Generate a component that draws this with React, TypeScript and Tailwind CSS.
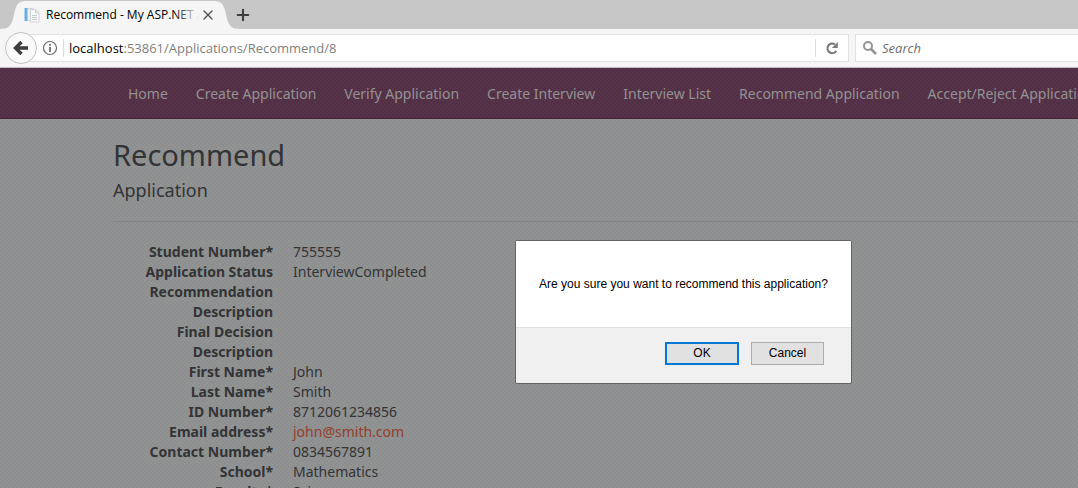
import { Plus, X } from 'lucide-react';

const navLinks = [
  'Home',
  'Create Application',
  'Verify Application',
  'Create Interview',
  'Interview List',
  'Recommend Application',
  'Accept/Reject Application',
];

const fields = [
  { label: 'Student Number*', value: '755555' },
  { label: 'Application Status', value: 'InterviewCompleted' },
  { label: 'Recommendation Description', value: '' },
  { label: 'Final Decision Description', value: '' },
  { label: 'First Name*', value: 'John' },
  { label: 'Last Name*', value: 'Smith' },
  { label: 'ID Number*', value: '8712061234856' },
  { label: 'Email address*', value: 'john@smith.com', mail: true },
  { label: 'Contact Number*', value: '0834567891' },
  { label: 'School*', value: 'Mathematics' },
  { label: 'Faculty*', value: 'Science' },
];

function PageIcon() {
  return (
    <svg width="16" height="16" viewBox="0 0 16 16" className="shrink-0">
      <path d="M1.500 1.500h8v12h-8z" fill="#eef1f4" stroke="#d6dade" />
      <path d="M0.500 1h3v13h-3z" fill="#69aede" />
      <path d="M6.500 2.500h5l3.500 3V15H6.500z" fill="#f7f8f9" stroke="#ced3d7" />
      <path d="M11.500 2.500V6H15" fill="#e4e7ea" stroke="#ced3d7" />
      <path d="M8 8.500h5M8 10.500h5M8 12.500h5" stroke="#c3c9cf" />
    </svg>
  );
}

function TabBar() {
  return (
    <div className="flex h-[29px] shrink-0 items-end bg-[#c7c7c7]">
      <div className="relative ml-[14px] flex h-7 w-[212px] items-center px-[10px]">
        <svg
          className="absolute -left-[14px] top-0"
          width="240"
          height="28"
          viewBox="0 0 240 28"
        >
          <path
            d="M0 28C8 28 11 25 13 18L15 9C17 3 19 0 26 0H214C221 0 223 3 225 9L227 18C229 25 232 28 240 28Z"
            fill="#f5f5f5"
          />
        </svg>
        <div className="relative flex w-full items-center">
          <PageIcon />
          <div className="relative ml-[6px] flex-1 overflow-hidden font-['Open_Sans',sans-serif] text-xs whitespace-nowrap text-black">
            Recommend - My ASP.NET Application
            <span className="absolute inset-y-0 right-0 w-6 bg-linear-to-r from-[#f5f5f5]/0 to-[#f5f5f5]" />
          </div>
          <button aria-label="Close tab" className="ml-px text-[#4d4d4d]">
            <X size={16} strokeWidth={1.8} />
          </button>
        </div>
      </div>
      <button aria-label="New tab" className="mb-[5px] ml-[8px] text-[#3f3f3f]">
        <Plus size={18} strokeWidth={2.8} />
      </button>
    </div>
  );
}

function Toolbar() {
  return (
    <div className="flex h-[39px] shrink-0 items-center overflow-hidden border-b border-[#bcbcbc] bg-[#f5f5f5] pl-[5px] font-['Open_Sans',sans-serif] text-[13px]">
      <button
        aria-label="Back"
        className="z-10 flex size-8 shrink-0 items-center justify-center rounded-full border border-[#c1c1c1] bg-[#fafafa]"
      >
        <svg width="16" height="16" viewBox="0 0 16 16">
          <path
            d="M8.500 2 2.500 8l6 6M3 8h12"
            fill="none"
            stroke="#3d3d3d"
            strokeWidth="3.400"
          />
        </svg>
      </button>
      <div className="-ml-3 flex h-7 flex-1 items-center border border-[#e1e1e1] bg-white pl-4">
        <svg width="16" height="16" viewBox="0 0 16 16" className="shrink-0">
          <circle cx="8" cy="8" r="6.500" fill="none" stroke="#6b6b6b" strokeWidth="1.200" />
          <path d="M7.100 7h1.800v5H7.100zM7.100 4h1.800v1.800H7.100z" fill="#6b6b6b" />
        </svg>
        <span className="ml-[5px] h-[18px] w-px bg-[#dcdcdc]" />
        <div className="ml-[5px] flex-1 pt-0.5 whitespace-nowrap text-[#808080]">
          <span className="text-black">localhost</span>:53861/Applications/Recommend/8
        </div>
        <span className="h-[18px] w-px bg-[#dcdcdc]" />
        <button aria-label="Reload" className="flex w-8 justify-center">
          <svg width="14" height="14" viewBox="0 0 14 14">
            <path
              d="M11.300 10A4.800 4.800 0 1 1 10 3.300"
              fill="none"
              stroke="#7b7b7b"
              strokeWidth="2.200"
            />
            <path d="M12.800 1v6h-6z" fill="#7b7b7b" />
          </svg>
        </button>
      </div>
      <label className="-mr-1 ml-[6px] flex h-7 w-[227px] items-center border border-[#e1e1e1] bg-white pl-[6px]">
        <svg width="16" height="16" viewBox="0 0 16 16" className="shrink-0">
          <circle cx="6" cy="6" r="4" fill="none" stroke="#949494" strokeWidth="2" />
          <path d="m9 9 5 5" stroke="#949494" strokeWidth="2.600" />
        </svg>
        <input
          aria-label="Search"
          placeholder="Search"
          className="ml-1 w-full min-w-0 pt-0.5 italic outline-none placeholder:text-[#6f6f6f]"
        />
      </label>
    </div>
  );
}

function ConfirmDialog() {
  return (
    <div
      role="dialog"
      aria-label="Confirm"
      className="absolute top-[172px] left-[515px] w-[337px] rounded-xs border border-[#626364] bg-[#f0f0f0] font-['Liberation_Sans',Arial,sans-serif] text-xs text-black"
    >
      <p className="border-b border-[#dfdfdf] bg-white py-[35px] text-center leading-4 whitespace-nowrap">
        Are you sure you want to recommend this application?
      </p>
      <div className="flex justify-end gap-3 pt-[14px] pr-[27px] pb-[18px]">
        <button className="h-[23px] w-[74px] border-2 border-[#0078d7] bg-[#e1e1e1] pb-0.5">
          OK
        </button>
        <button className="h-[23px] w-[73px] border border-[#adadad] bg-[#e1e1e1] pb-0.5">
          Cancel
        </button>
      </div>
    </div>
  );
}

export default function App() {
  return (
    <div className="flex h-screen flex-col overflow-hidden">
      <TabBar />
      <Toolbar />
      <div className="relative min-h-0 flex-1 overflow-hidden bg-[#8f9091] bg-[repeating-conic-gradient(#8d8e8f_0_25%,#929393_0_50%)] bg-size-[4px_4px] font-['Noto_Sans',sans-serif] text-sm leading-5 text-[#333435]">
        <nav className="flex h-[51px] items-center gap-7 overflow-hidden border-b border-[#432438] bg-[#533147] bg-[repeating-conic-gradient(#513046_0_25%,#563349_0_50%)] bg-size-[4px_4px] pt-0.5 pl-32 whitespace-nowrap text-[#949192]">
          {navLinks.map((name) => (
            <a key={name} href="#">
              {name}
            </a>
          ))}
        </nav>
        <main className="pl-[113px]">
          <h2 className="pt-[19px] text-[29px] leading-[34px]">Recommend</h2>
          <h4 className="mt-2 text-lg leading-5">Application</h4>
          <hr className="mt-[21px] border-[#848586]" />
          <dl className="mt-5 grid grid-cols-[160px_1fr] gap-x-5">
            {fields.map((field) => (
              <div key={field.label} className="contents">
                <dt className="pl-8 text-right font-bold">{field.label}</dt>
                <dd>
                  {field.mail ? (
                    <a href="mailto:john@smith.com" className="text-[#91402c]">
                      {field.value}
                    </a>
                  ) : (
                    field.value
                  )}
                </dd>
              </div>
            ))}
          </dl>
        </main>
        <ConfirmDialog />
      </div>
    </div>
  );
}
